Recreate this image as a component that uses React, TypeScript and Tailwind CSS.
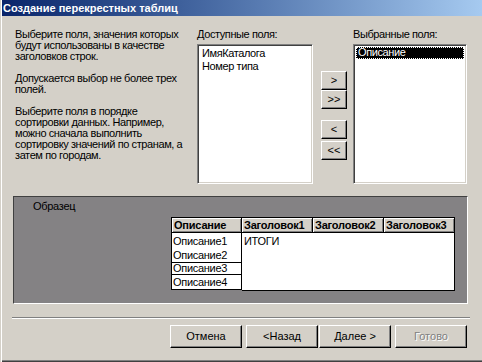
import React from 'react';

const raised =
  'bg-[#d4d0c8] border border-t-white border-l-white border-r-black border-b-black shadow-[inset_-1px_-1px_0_#808080]';
const sunken =
  'bg-white border border-t-[#808080] border-l-[#808080] border-r-white border-b-white shadow-[inset_1px_1px_0_#404040,inset_-1px_-1px_0_#d4d0c8]';

function MoveButton({ label, className = '' }: { label: string; className?: string }) {
  return (
    <div className={`${raised} w-[26px] h-[19px] flex items-center justify-center text-[11px] leading-none ${className}`}>
      {label}
    </div>
  );
}

function WizardButton({ label, disabled = false, className = '' }: { label: string; disabled?: boolean; className?: string }) {
  return (
    <div className={`${raised} w-[72px] h-[23px] flex items-center justify-center text-[11px] ${className}`}>
      {disabled ? (
        <span className="text-[#808080] [text-shadow:1px_1px_0_#fff]">{label}</span>
      ) : (
        label
      )}
    </div>
  );
}

const headCell =
  'h-[16px] bg-[#d4d0c8] border border-black shadow-[inset_1px_1px_0_#fff,inset_-1px_-1px_0_#808080] text-[11px] font-bold leading-[14px] px-[2px] whitespace-nowrap overflow-hidden tracking-[-0.2px]';

export default function App() {
  return (
    <div
      className="w-[482px] h-[362px] bg-[#d4d0c8] text-black flex flex-col shadow-[inset_1px_0_0_#d4d0c8,inset_2px_0_0_#fff,inset_0_-1px_0_#404040,inset_0_-2px_0_#808080]"
      style={{ fontFamily: '"Liberation Sans", Arial, sans-serif' }}
    >
      {/* заголовок окна */}
      <div className="ml-[2px] h-[16px] shrink-0 bg-gradient-to-r from-[#0a246a] to-[#a6caf0] text-white font-bold text-[11px] leading-[16px] pl-[1px]">
        Создание перекрестных таблиц
      </div>

      {/* верхняя часть */}
      <div className="flex h-[180px] shrink-0 pt-[13px] text-[11px] tracking-[-0.4px]">
        <div className="ml-[15px] w-[176px] leading-[11px] whitespace-nowrap">
          <p>Выберите поля, значения которых</p>
          <p>будут использованы в качестве</p>
          <p>заголовков строк.</p>
          <p className="mt-[11px]">Допускается выбор не более трех</p>
          <p>полей.</p>
          <p className="mt-[11px]">Выберите поля в порядке</p>
          <p>сортировки данных. Например,</p>
          <p>можно сначала выполнить</p>
          <p>сортировку значений по странам, а</p>
          <p>затем по городам.</p>
        </div>

        <div className="ml-[6px] flex flex-col">
          <div className="h-[15px] leading-[11px]">Доступные поля:</div>
          <div className="flex">
            <div className={`${sunken} w-[116px] h-[140px] pt-[2px] pl-[4px] leading-[13px]`}>
              <div>ИмяКаталога</div>
              <div>Номер типа</div>
            </div>
            <div className="ml-[8px] pt-[27px] flex flex-col tracking-normal">
              <MoveButton label=">" />
              <MoveButton label=">>" />
              <MoveButton label="<" className="mt-[11px]" />
              <MoveButton label="<<" className="mt-[2px]" />
            </div>
          </div>
        </div>

        <div className="ml-[6px] flex flex-col">
          <div className="h-[15px] leading-[11px]">Выбранные поля:</div>
          <div className={`${sunken} w-[114px] h-[140px] p-[2px]`}>
            <div className="h-[12px] bg-black text-white leading-[11px] pl-[2px] outline outline-1 outline-dotted outline-white -outline-offset-1">
              Описание
            </div>
          </div>
        </div>
      </div>

      {/* образец */}
      <div className="ml-[13px] w-[455px] h-[108px] shrink-0 bg-[#848284] border border-t-[#404040] border-l-[#404040] border-r-white border-b-white pl-[19px] pt-[3px] text-[11px] tracking-[-0.3px]">
        <div className="leading-[13px]">Образец</div>
        <div className="mt-[4px] ml-[138px] flex items-start">
          <div className="w-[71px] flex flex-col">
            <div className={headCell}>Описание</div>
            <div className="h-[30px] bg-white border-x border-b border-black leading-[14px] pl-[1px] pt-[1px]">
              <div>Описание1</div>
              <div>Описание2</div>
            </div>
            <div className="h-[12px] bg-white border-x border-b border-black leading-[11px] pl-[1px]">
              Описание3
            </div>
            <div className="h-[15px] bg-white border-x border-b border-black leading-[14px] pl-[1px]">
              Описание4
            </div>
          </div>
          <div className="w-[213px] flex flex-col">
            <div className="flex">
              <div className={`${headCell} w-[71px] border-l-0`}>Заголовок1</div>
              <div className={`${headCell} w-[71px] border-l-0`}>Заголовок2</div>
              <div className={`${headCell} w-[71px] border-l-0`}>Заголовок3</div>
            </div>
            <div className="h-[58px] bg-white border-r border-b border-black leading-[14px] pl-[2px] pt-[1px]">
              ИТОГИ
            </div>
          </div>
        </div>
      </div>

      {/* разделитель */}
      <div className="mt-[13px] ml-[12px] w-[458px] h-[2px] shrink-0 border-t border-t-[#808080] border-b border-b-white" />

      {/* кнопки */}
      <div className="mt-[6px] ml-[170px] flex shrink-0">
        <WizardButton label="Отмена" />
        <WizardButton label="<Назад" className="ml-[4px]" />
        <WizardButton label="Далее >" className="ml-[1px]" />
        <WizardButton label="Готово" disabled className="ml-[4px]" />
      </div>
    </div>
  );
}
